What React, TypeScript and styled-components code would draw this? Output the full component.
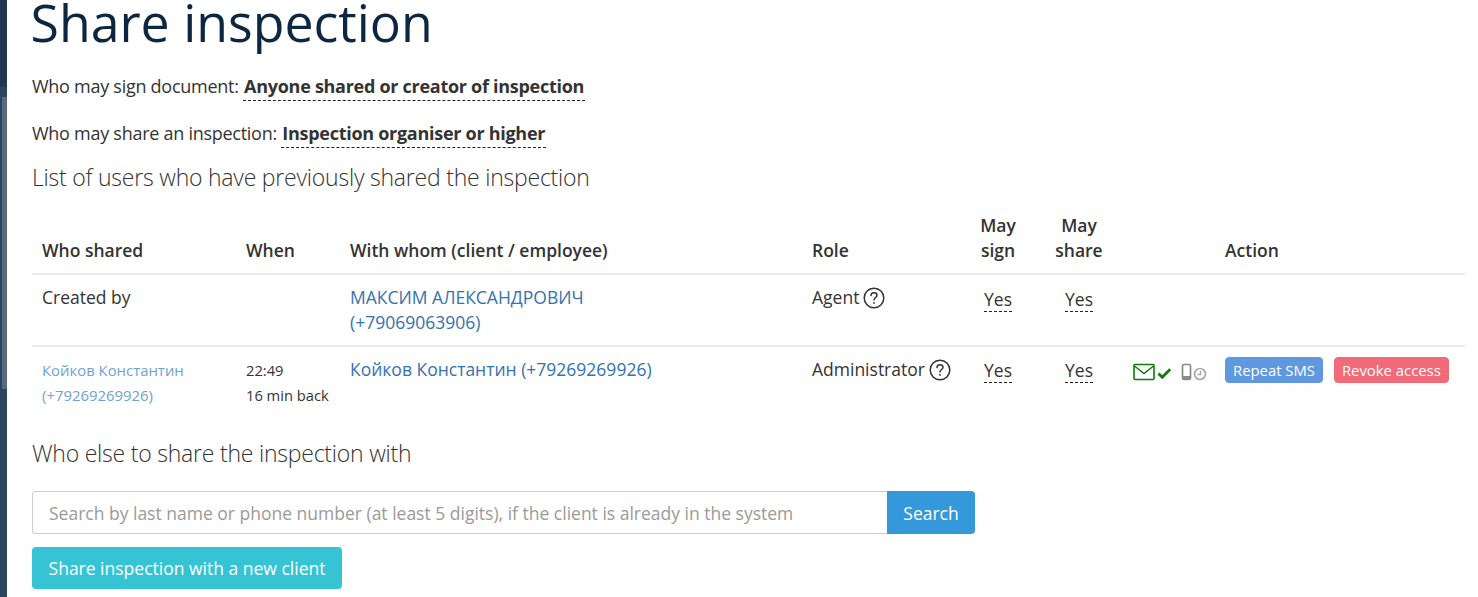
import React from "react";
import styled, { createGlobalStyle } from "styled-components";

const Global = createGlobalStyle`
  html, body { margin: 0; padding: 0; background: #fff; overflow: hidden; }
  body { font-family: "Open Sans", "Liberation Sans", sans-serif; font-size: 16px; color: #333; }
`;

const Page = styled.div`
  display: flex;
  width: 1478px;
  height: 597px;
  overflow: hidden;
`;
const Rail = styled.div`
  position: relative;
  width: 7px;
  flex: none;
  background: linear-gradient(#22364d 0, #22364d 87px, #2b4560 87px, #2b4560 100%);
`;
const RailThumb = styled.div`
  position: absolute;
  top: 97px;
  left: 2px;
  right: 0;
  height: 292px;
  background: #5a6a7c;
`;
const Content = styled.main`
  flex: 1;
  padding: 0 13px 0 25px;
`;
const Title = styled.h1`
  margin: 0 0 0 -1.5px;
  font-size: 51.8px;
  line-height: 44px;
  font-weight: 500;
  color: #0e2741;
`;
const Rule = styled.p<{ $gap: number }>`
  margin: ${(p) => p.$gap}px 0 0;
  font-size: 18px;
  line-height: 26px;
  font-weight: 400;
  letter-spacing: -0.27px;
  color: #333;
`;
const RuleValue = styled.span`
  font-weight: 700;
  letter-spacing: -0.28px;
  border-bottom: 1px dashed #222;
  padding: 0 1px 2px;
`;
const SectionTitle = styled.h2<{ $top: number }>`
  margin: ${(p) => p.$top}px 0 0;
  font-size: 23px;
  line-height: 30px;
  font-weight: 300;
  letter-spacing: -0.22px;
  color: #333;
`;
const Table = styled.table`
  width: 1433px;
  margin-top: 21px;
  border-collapse: collapse;
  table-layout: fixed;
`;
const Head = styled.th<{ $center?: boolean }>`
  padding: 0 10px 10px;
  text-align: ${(p) => (p.$center ? "center" : "left")};
  vertical-align: bottom;
  font-size: 17.5px;
  line-height: 25px;
  font-weight: 600;
  color: #333;
  border-bottom: 2px solid #e9ecef;
`;
const Row = styled.tr`
  &:first-child td { border-top: none; height: 72px; }
`;
const Cell = styled.td<{ $center?: boolean; $flush?: boolean }>`
  padding: ${(p) => (p.$flush ? "13px 0 0 1px" : "10px 10px 0")};
  vertical-align: top;
  text-align: ${(p) => (p.$center ? "center" : "left")};
  font-size: 17.5px;
  line-height: 25px;
  color: #333;
  border-top: 2px solid #e9ecef;
  height: 72px;
  box-sizing: border-box;
`;
const PersonLink = styled.a`
  color: #3572b0;
  text-decoration: none;
`;
const SmallLink = styled.a`
  display: block;
  margin-top: 1px;
  color: #6fa3d3;
  font-size: 14.9px;
  line-height: 25px;
  text-decoration: none;
`;
const SmallTime = styled.div`
  margin-top: 1px;
  font-size: 14.7px;
  line-height: 25px;
`;
const RoleHelp = styled.span`
  display: inline-flex;
  align-items: center;
  gap: 4px;
  white-space: nowrap;
`;
const DashedYes = styled.span<{ $drop: number }>`
  display: inline-block;
  margin-top: ${(p) => p.$drop}px;
  border-bottom: 1px dashed #222;
  line-height: 24px;
`;
const IconStrip = styled.div`
  display: flex;
  align-items: center;
  height: 24px;
`;
const Actions = styled.div`
  display: flex;
  gap: 11px;
`;
const SmallButton = styled.button<{ $bg: string }>`
  height: 26px;
  padding: 0 7px;
  border: 1px solid ${(p) => p.$bg};
  border-radius: 4px;
  background: ${(p) => p.$bg};
  color: #fff;
  font: 400 14.85px/24px "Open Sans", sans-serif;
  white-space: nowrap;
`;
const SearchBar = styled.div`
  display: flex;
  width: 943px;
  height: 43px;
  margin-top: 23px;
`;
const SearchInput = styled.input`
  flex: 1;
  min-width: 0;
  box-sizing: border-box;
  padding: 0 16px;
  border: 1px solid #c5cfdc;
  border-right: none;
  border-radius: 4px 0 0 4px;
  font: 400 17.5px "Open Sans", sans-serif;
  color: #333;
  &::placeholder { color: #9a9a9a; opacity: 1; }
`;
const SearchButton = styled.button`
  width: 88px;
  padding-bottom: 1px;
  border: none;
  border-radius: 0 4px 4px 0;
  background: #3498db;
  color: #fff;
  font: 400 17.5px "Open Sans", sans-serif;
`;
const ShareButton = styled.button`
  display: block;
  width: 310px;
  height: 42px;
  margin-top: 13px;
  padding-bottom: 2px;
  border: none;
  border-radius: 4px;
  background: #36c4d4;
  color: #fff;
  font: 400 17.5px "Open Sans", sans-serif;
`;

const Help = () => (
  <svg width="22" height="22" viewBox="0 0 22 22" fill="none" stroke="#333" strokeWidth="1.5">
    <circle cx="11" cy="11" r="9.8" />
    <path d="M8 8.6c0-1.8 1.3-2.9 3-2.9s3 1.1 3 2.6c0 2.2-3 2.3-3 4.8" strokeLinecap="round" />
    <circle cx="11" cy="15.9" r="0.9" fill="#333" stroke="none" />
  </svg>
);

const StatusIcons = () => (
  <svg width="76" height="20" viewBox="0 0 76 20" fill="none">
    <rect x="1" y="2.5" width="20" height="15" rx="1" stroke="#117a11" strokeWidth="1.6" />
    <path d="M1.5 4l9.5 7.5L20.500 4" stroke="#117a11" strokeWidth="1.5" />
    <path d="M25.500 11.500l3.700 3.700 8-8" stroke="#117a11" strokeWidth="2.800" />
    <rect x="49.500" y="2.500" width="8" height="15" rx="1.500" stroke="#8a8a8a" strokeWidth="1.700" />
    <rect x="50" y="14" width="7" height="3.500" fill="#8a8a8a" />
    <circle cx="67" cy="12" r="5.500" stroke="#a8a8a8" strokeWidth="1.700" />
    <path d="M67.500 8.800v3.700h-3" stroke="#a8a8a8" strokeWidth="1.400" />
  </svg>
);

export default function App() {
  return (
    <Page>
      <Global />
      <Rail><RailThumb /></Rail>
      <Content>
        <Title>Share inspection</Title>
        <Rule $gap={29}>Who may sign document: <RuleValue>Anyone shared or creator of inspection</RuleValue></Rule>
        <Rule $gap={21}>Who may share an inspection: <RuleValue>Inspection organiser or higher</RuleValue></Rule>
        <SectionTitle $top={16}>List of users who have previously shared the inspection</SectionTitle>
        <Table>
          <colgroup>
            <col style={{ width: 204 }} />
            <col style={{ width: 104 }} />
            <col style={{ width: 462 }} />
            <col style={{ width: 168 }} />
            <col style={{ width: 56 }} />
            <col style={{ width: 106 }} />
            <col style={{ width: 83 }} />
            <col />
          </colgroup>
          <thead>
            <tr>
              <Head>Who shared</Head>
              <Head>When</Head>
              <Head>With whom (client / employee)</Head>
              <Head>Role</Head>
              <Head $center>May<br />sign</Head>
              <Head $center>May<br />share</Head>
              <Head />
              <Head>Action</Head>
            </tr>
          </thead>
          <tbody>
            <Row>
              <Cell>Created by</Cell>
              <Cell />
              <Cell><PersonLink>МАКСИМ АЛЕКСАНДРОВИЧ<br />(+79069063906)</PersonLink></Cell>
              <Cell><RoleHelp>Agent <Help /></RoleHelp></Cell>
              <Cell $center><DashedYes $drop={2}>Yes</DashedYes></Cell>
              <Cell $center><DashedYes $drop={2}>Yes</DashedYes></Cell>
              <Cell />
              <Cell />
            </Row>
            <Row>
              <Cell><SmallLink>Койков Константин (+79269269926)</SmallLink></Cell>
              <Cell><SmallTime>22:49<br />16 min back</SmallTime></Cell>
              <Cell><PersonLink>Койков Константин (+79269269926)</PersonLink></Cell>
              <Cell><RoleHelp>Administrator <Help /></RoleHelp></Cell>
              <Cell $center><DashedYes $drop={1}>Yes</DashedYes></Cell>
              <Cell $center><DashedYes $drop={1}>Yes</DashedYes></Cell>
              <Cell $flush><IconStrip><StatusIcons /></IconStrip></Cell>
              <Cell><Actions><SmallButton $bg="#6098e0">Repeat SMS</SmallButton><SmallButton $bg="#f06a78">Revoke access</SmallButton></Actions></Cell>
            </Row>
          </tbody>
        </Table>
        <SectionTitle $top={20}>Who else to share the inspection with</SectionTitle>
        <SearchBar>
          <SearchInput placeholder="Search by last name or phone number (at least 5 digits), if the client is already in the system" />
          <SearchButton>Search</SearchButton>
        </SearchBar>
        <ShareButton>Share inspection with a new client</ShareButton>
      </Content>
    </Page>
  );
}
